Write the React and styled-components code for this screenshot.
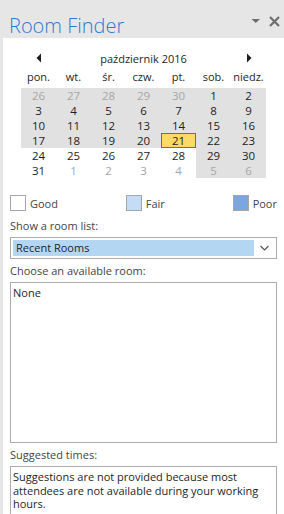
import React from 'react';
import styled, { createGlobalStyle } from 'styled-components';

const GlobalStyle = createGlobalStyle`
  body {
    margin: 0;
    background: #e6e6e6;
    font-family: "Segoe UI", "Open Sans", "Liberation Sans", sans-serif;
  }
`;

const weekdays = ['pon.', 'wt.', 'śr.', 'czw.', 'pt.', 'sob.', 'niedz.'];

// each row: [day, outsideMonth]
const weeks = [
  [[26, 1], [27, 1], [28, 1], [29, 1], [30, 1], [1], [2]],
  [[3], [4], [5], [6], [7], [8], [9]],
  [[10], [11], [12], [13], [14], [15], [16]],
  [[17], [18], [19], [20], [21], [22], [23]],
  [[24], [25], [26], [27], [28], [29], [30]],
  [[31], [1, 1], [2, 1], [3, 1], [4, 1], [5, 1], [6, 1]],
];

const App = () => {
  return (
    <>
      <GlobalStyle />
      <Pane>
        <TitleBar>
          <Title>Room Finder</Title>
          <TitleIcons>
            <svg width="10" height="6" viewBox="0 0 10 6">
              <path d="M0.5 1 L9 1 L4.75 5 Z" fill="#6d6d6d" />
            </svg>
            <svg width="11" height="11" viewBox="0 0 11 11">
              <path d="M1 1 L10 10 M10 1 L1 10" stroke="#6d6d6d" strokeWidth="2.2" />
            </svg>
          </TitleIcons>
        </TitleBar>

        <Body>
          <Calendar>
            <NavRow>
              <NavArrow>
                <svg width="6" height="10" viewBox="0 0 6 10">
                  <path d="M5 0.5 L5 9.5 L0.5 5 Z" fill="#1e1e1e" />
                </svg>
              </NavArrow>
              <MonthLabel>październik 2016</MonthLabel>
              <NavArrow>
                <svg width="6" height="10" viewBox="0 0 6 10">
                  <path d="M1 0.5 L1 9.5 L5.5 5 Z" fill="#1e1e1e" />
                </svg>
              </NavArrow>
            </NavRow>
            <DayGrid>
              {weekdays.map((d) => (
                <WeekdayCell key={d}>{d}</WeekdayCell>
              ))}
              {weeks.map((week, r) =>
                week.map(([day, outside], c) => {
                  const shaded = r < 4 || c >= 5;
                  const selected = r === 3 && c === 4;
                  return (
                    <DayCell
                      key={`${r}-${c}`}
                      $shaded={shaded}
                      $outside={!!outside}
                      $selected={selected}
                    >
                      {day}
                    </DayCell>
                  );
                })
              )}
            </DayGrid>
          </Calendar>

          <Legend>
            <LegendItem>
              <Swatch $color="#ffffff" />
              Good
            </LegendItem>
            <LegendItem>
              <Swatch $color="#c5dcf7" />
              Fair
            </LegendItem>
            <LegendItem>
              <Swatch $color="#7aa7e0" />
              Poor
            </LegendItem>
          </Legend>

          <FieldLabel $top="8px">Show a room list:</FieldLabel>
          <Dropdown>
            <DropdownValue>Recent Rooms</DropdownValue>
            <Chevron>
              <svg width="9" height="6" viewBox="0 0 9 6">
                <path d="M0.5 1 L4.5 5 L8.5 1" fill="none" stroke="#555" strokeWidth="1.2" />
              </svg>
            </Chevron>
          </Dropdown>

          <FieldLabel>Choose an available room:</FieldLabel>
          <ListBox $height="161px">
            <ListText>None</ListText>
          </ListBox>

          <FieldLabel>Suggested times:</FieldLabel>
          <ListBox $height="80px">
            <ListText>
              Suggestions are not provided because most attendees are not available during your
              working hours.
            </ListText>
          </ListBox>
        </Body>
      </Pane>
    </>
  );
};

const Pane = styled.div`
  width: 284px;
  height: 514px;
  overflow: hidden;
  background: #e6e6e6;
  display: flex;
  flex-direction: column;
`;

const TitleBar = styled.div`
  height: 38px;
  flex-shrink: 0;
  display: flex;
  align-items: center;
  justify-content: space-between;
  padding: 0 4px 0 9px;
`;

const Title = styled.div`
  font-weight: 300;
  font-size: 20px;
  line-height: 24px;
  color: #2b7bd3;
  margin-top: 14px;
`;

const TitleIcons = styled.div`
  display: flex;
  align-items: center;
  gap: 8px;
  margin-top: 4px;
`;

const Body = styled.div`
  flex: 1;
  margin-left: 3px;
  background: #ffffff;
  padding: 12px 7px 0 7px;
  display: flex;
  flex-direction: column;
`;

const Calendar = styled.div`
  margin-left: 11px;
  width: 245px;
`;

const NavRow = styled.div`
  display: grid;
  grid-template-columns: 35px 1fr 35px;
  height: 16px;
  align-items: center;
`;

const NavArrow = styled.div`
  display: flex;
  justify-content: center;
  align-items: center;
`;

const MonthLabel = styled.div`
  text-align: center;
  font-size: 11px;
  color: #262626;
`;

const DayGrid = styled.div`
  display: grid;
  grid-template-columns: repeat(7, 35px);
  grid-template-rows: 18px repeat(6, 15px);
  margin-top: 4px;
`;

const WeekdayCell = styled.div`
  font-size: 11px;
  color: #262626;
  text-align: center;
  line-height: 14px;
`;

const DayCell = styled.div`
  box-sizing: border-box;
  font-size: 11.5px;
  line-height: 13px;
  text-align: center;
  color: ${(p) => (p.$outside ? '#a6a6a6' : '#1e1e1e')};
  background: ${(p) => (p.$selected ? '#ffd966' : p.$shaded ? '#e1e1e1' : '#ffffff')};
  border: 1px solid ${(p) => (p.$selected ? '#2b7bd3' : 'transparent')};
`;

const Legend = styled.div`
  display: flex;
  justify-content: space-between;
  margin-top: 17px;
`;

const LegendItem = styled.div`
  display: flex;
  align-items: center;
  gap: 4px;
  font-size: 11px;
  color: #444444;
  height: 16px;
`;

const Swatch = styled.div`
  box-sizing: border-box;
  width: 16px;
  height: 16px;
  background: ${(p) => p.$color};
  border: 1px solid #a6a6a6;
`;

const FieldLabel = styled.div`
  font-size: 11px;
  color: #444444;
  line-height: 14px;
  margin-top: ${(p) => p.$top || '5px'};
  margin-bottom: 4px;
`;

const Dropdown = styled.div`
  box-sizing: border-box;
  height: 22px;
  border: 1px solid #ababab;
  display: flex;
  align-items: center;
  padding: 2px;
`;

const DropdownValue = styled.div`
  flex: 1;
  height: 16px;
  background: #b3d7f3;
  font-size: 11px;
  line-height: 16px;
  padding-left: 3px;
  color: #1e1e1e;
`;

const Chevron = styled.div`
  width: 20px;
  display: flex;
  justify-content: center;
  align-items: center;
`;

const ListBox = styled.div`
  box-sizing: border-box;
  height: ${(p) => p.$height};
  flex-shrink: 0;
  border: 1px solid #ababab;
  padding: 3px 2px;
`;

const ListText = styled.div`
  font-size: 11px;
  line-height: 13.5px;
  color: #1e1e1e;
`;

export default App;
